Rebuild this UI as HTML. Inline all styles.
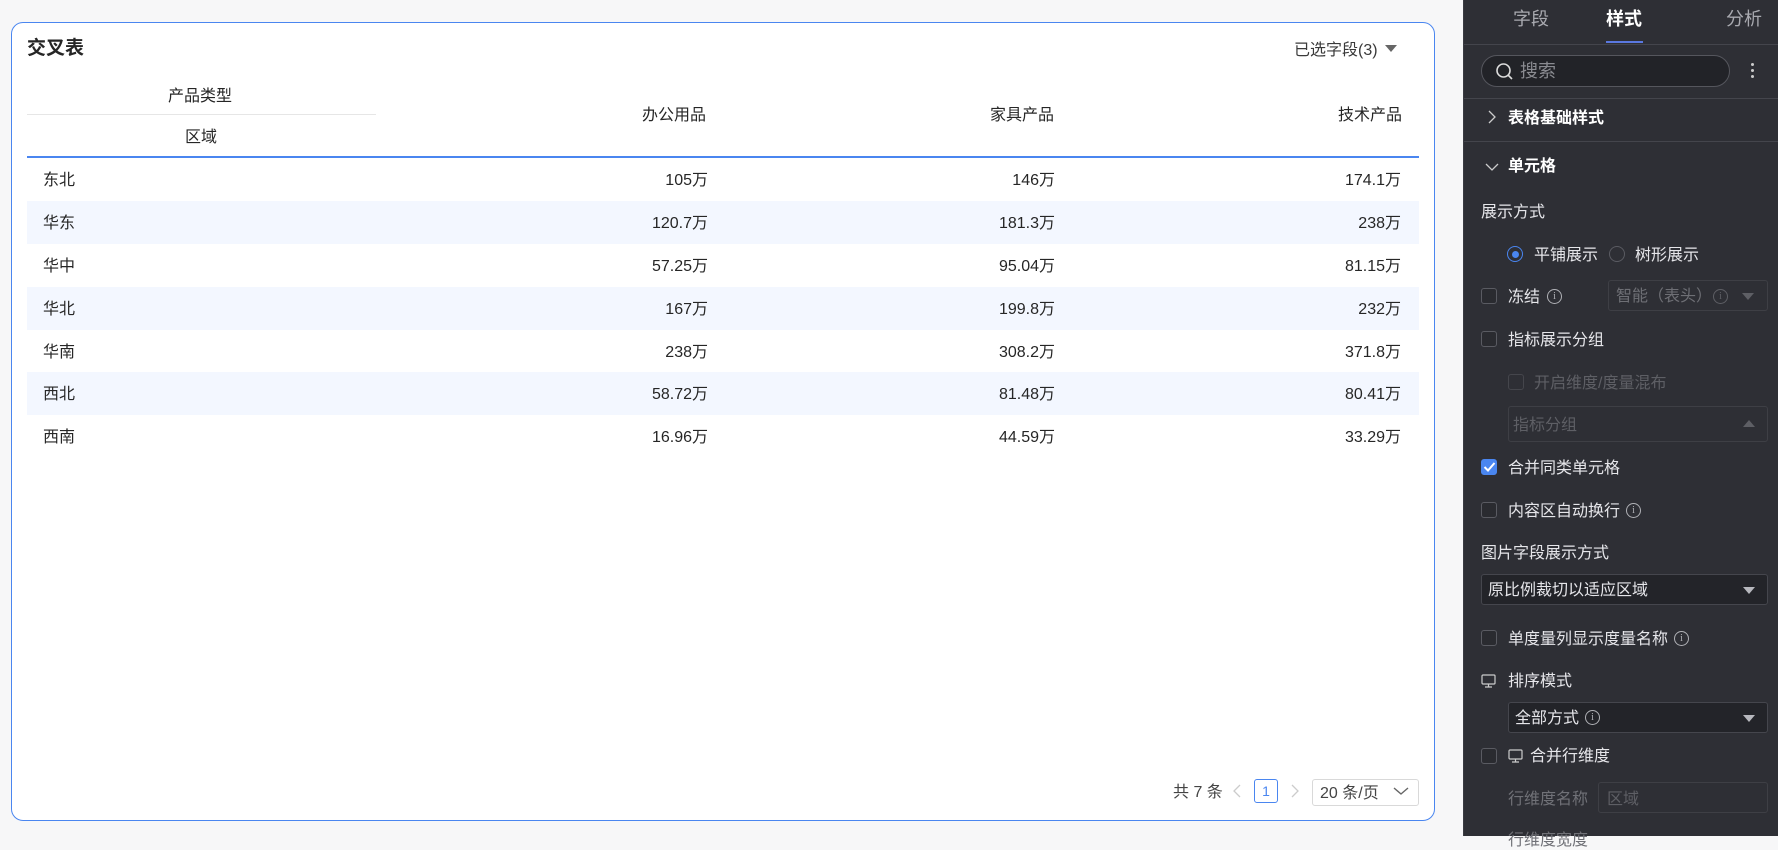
<!DOCTYPE html>
<html><head><meta charset="utf-8">
<style>
*{box-sizing:border-box;margin:0;padding:0}
body{width:1778px;height:836px;overflow:hidden;background:#f7f7f8;font-family:"Liberation Sans","Noto Sans CJK SC",sans-serif;position:relative}
.a{position:absolute;white-space:nowrap}
.card{position:absolute;left:11px;top:22px;width:1424px;height:799px;background:#fff;border:1.5px solid #4a86f0;border-radius:12px}
.t{font-size:16px;color:#262626}
.row{position:absolute;left:27px;width:1392px;height:43px}
.row.s{background:#f3f7ff}
.row span{position:absolute;top:8px;font-size:16px;color:#262626}
.panel{position:absolute;left:1463px;top:0;width:315px;height:836px;background:#2e2f35;border-left:1px solid #3a3b42}
.pt{position:absolute;white-space:nowrap;font-size:16px;color:#e6e6ea;margin-top:-3px}
.tx{margin-top:-3px}
.dim{color:#6e6f75}
.cb{position:absolute;width:16px;height:16px;border:1px solid #5a5b62;border-radius:3px;background:#2a2b30}
.sel{position:absolute;border:1px solid #45464d;border-radius:3px;background:#232429}
.tri{position:absolute;width:0;height:0;border-left:6px solid transparent;border-right:6px solid transparent;border-top:7px solid #b7b8be}
.info{position:absolute;width:15px;height:15px;border:1.3px solid #b0b1b6;border-radius:50%;font-size:10px;color:#b0b1b6;text-align:center;line-height:13px;font-family:"Liberation Serif",serif}
.hl{position:absolute;left:0;width:315px;height:1px;background:#44454c}
</style></head><body>
<div class="card"></div>
<div class="a tx" style="left:27px;top:36px;font-size:19px;font-weight:bold;color:#262626">交叉表</div>
<div class="a tx" style="left:1294px;top:39px;font-size:16px;color:#3a3a3a">已选字段(3)</div>
<div class="a" style="left:1385px;top:45px;width:0;height:0;border-left:6px solid transparent;border-right:6px solid transparent;border-top:7px solid #666"></div>
<div class="a t tx" style="left:168px;top:85px">产品类型</div>
<div class="a" style="left:27px;top:114px;width:349px;height:1px;background:#e6e6e6"></div>
<div class="a t tx" style="left:185px;top:126px">区域</div>
<div class="a t tx" style="left:642px;top:104px">办公用品</div>
<div class="a t tx" style="left:990px;top:104px">家具产品</div>
<div class="a t tx" style="left:1338px;top:104px">技术产品</div>
<div class="a" style="left:27px;top:156px;width:1392px;height:1.5px;background:#4a86f0"></div>

<div class="row" style="top:158px"><span style="left:16px">东北</span><span style="right:711px">105万</span><span style="right:364px">146万</span><span style="right:18px">174.1万</span></div>
<div class="row s" style="top:201px"><span style="left:16px">华东</span><span style="right:711px">120.7万</span><span style="right:364px">181.3万</span><span style="right:18px">238万</span></div>
<div class="row" style="top:244px"><span style="left:16px">华中</span><span style="right:711px">57.25万</span><span style="right:364px">95.04万</span><span style="right:18px">81.15万</span></div>
<div class="row s" style="top:287px"><span style="left:16px">华北</span><span style="right:711px">167万</span><span style="right:364px">199.8万</span><span style="right:18px">232万</span></div>
<div class="row" style="top:330px"><span style="left:16px">华南</span><span style="right:711px">238万</span><span style="right:364px">308.2万</span><span style="right:18px">371.8万</span></div>
<div class="row s" style="top:372px"><span style="left:16px">西北</span><span style="right:711px">58.72万</span><span style="right:364px">81.48万</span><span style="right:18px">80.41万</span></div>
<div class="row" style="top:415px"><span style="left:16px">西南</span><span style="right:711px">16.96万</span><span style="right:364px">44.59万</span><span style="right:18px">33.29万</span></div>

<div class="a tx" style="left:1173px;top:781px;font-size:16px;color:#444">共 7 条</div>
<svg class="a" style="left:1232px;top:784px" width="10" height="14"><path d="M8 1L2 7l6 6" stroke="#ccc" stroke-width="1.3" fill="none"/></svg>
<div class="a" style="left:1254px;top:779px;width:24px;height:24px;border:1px solid #4a86f0;border-radius:3px;color:#4a86f0;font-size:14px;text-align:center;line-height:22px">1</div>
<svg class="a" style="left:1290px;top:784px" width="10" height="14"><path d="M2 1l6 6-6 6" stroke="#ccc" stroke-width="1.3" fill="none"/></svg>
<div class="a" style="left:1312px;top:779px;width:107px;height:27px;border:1px solid #d9d9d9;border-radius:3px"></div>
<div class="a tx" style="left:1320px;top:782px;font-size:16px;color:#444">20 条/页</div>
<svg class="a" style="left:1393px;top:786px" width="16" height="10"><path d="M1 2l7 6 7-6" stroke="#666" stroke-width="1.4" fill="none"/></svg>

<div class="panel">
 <div class="pt" style="left:49px;top:8px;font-size:18px;color:#a9aab0">字段</div>
 <div class="pt" style="left:142px;top:8px;font-size:18px;color:#fff;font-weight:bold">样式</div>
 <div class="pt" style="left:262px;top:8px;font-size:18px;color:#a9aab0">分析</div>
 <div style="position:absolute;left:142px;top:41px;width:37px;height:2px;background:#5a78e0"></div>
 <div class="hl" style="top:44px"></div>
 <div style="position:absolute;left:17px;top:55px;width:249px;height:32px;border:1px solid #55565d;border-radius:16px;background:#222328"></div>
 <svg style="position:absolute;left:31px;top:62px" width="20" height="20"><circle cx="8.5" cy="8.5" r="6.5" stroke="#ddd" stroke-width="1.6" fill="none"/><path d="M13 13l4 4" stroke="#ddd" stroke-width="1.6"/></svg>
 <div class="pt" style="left:56px;top:60px;font-size:18px;color:#8a8b91">搜索</div>
 <div style="position:absolute;left:287px;top:63px;width:3px;height:3px;border-radius:50%;background:#ccc;box-shadow:0 6px 0 #ccc,0 12px 0 #ccc"></div>
 <div class="hl" style="top:98px"></div>
 <svg style="position:absolute;left:23px;top:110px" width="10" height="14"><path d="M2 1l6 6-6 6" stroke="#ccc" stroke-width="1.3" fill="none"/></svg>
 <div class="pt" style="left:44px;top:107px;font-weight:bold;color:#fff">表格基础样式</div>
 <div class="hl" style="top:141px"></div>
 <svg style="position:absolute;left:21px;top:162px" width="14" height="10"><path d="M1 2l6 6 6-6" stroke="#ccc" stroke-width="1.3" fill="none"/></svg>
 <div class="pt" style="left:44px;top:155px;font-weight:bold;color:#fff">单元格</div>
 <div class="pt" style="left:17px;top:201px">展示方式</div>
 <div style="position:absolute;left:43px;top:246px;width:16px;height:16px;border:1.5px solid #4a86f0;border-radius:50%"></div>
 <div style="position:absolute;left:47.5px;top:250.5px;width:7px;height:7px;background:#4a86f0;border-radius:50%"></div>
 <div class="pt" style="left:70px;top:244px">平铺展示</div>
 <div style="position:absolute;left:145px;top:246px;width:16px;height:16px;border:1px solid #5a5b62;border-radius:50%"></div>
 <div class="pt" style="left:171px;top:244px">树形展示</div>

 <div class="cb" style="left:17px;top:288px"></div>
 <div class="pt" style="left:44px;top:286px">冻结</div>
 <div class="info" style="left:83px;top:289px">i</div>
 <div class="sel" style="left:144px;top:280px;width:160px;height:31px;border-color:#3e3f45;background:#2e2f35"></div>
 <div class="pt dim" style="left:152px;top:285px">智能（表头）</div>
 <div class="info" style="left:249px;top:289px;border-color:#5e5f65;color:#5e5f65">i</div>
 <div class="tri" style="left:278px;top:293px;border-top-color:#5e5f65"></div>

 <div class="cb" style="left:17px;top:331px"></div>
 <div class="pt" style="left:44px;top:329px">指标展示分组</div>
 <div class="cb" style="left:44px;top:374px;border-color:#45464c;background:#2e2f35"></div>
 <div class="pt dim" style="left:70px;top:372px;color:#5e5f65">开启维度/度量混布</div>
 <div class="sel" style="left:44px;top:406px;width:260px;height:36px;border-color:#3e3f45;background:#2e2f35"></div>
 <div class="pt" style="left:49px;top:414px;color:#5e5f65">指标分组</div>
 <div class="tri" style="left:279px;top:420px;border-top:none;border-bottom:7px solid #5e5f65"></div>

 <div class="cb" style="left:17px;top:459px;background:#4a86f0;border-color:#4a86f0"></div>
 <svg style="position:absolute;left:19px;top:461px" width="13" height="12"><path d="M1.5 6l3.5 3.5 6.5-7.5" stroke="#fff" stroke-width="2" fill="none"/></svg>
 <div class="pt" style="left:44px;top:457px">合并同类单元格</div>
 <div class="cb" style="left:17px;top:502px"></div>
 <div class="pt" style="left:44px;top:500px">内容区自动换行</div>
 <div class="info" style="left:162px;top:503px">i</div>
 <div class="pt" style="left:17px;top:542px">图片字段展示方式</div>
 <div class="sel" style="left:17px;top:574px;width:287px;height:31px"></div>
 <div class="pt" style="left:24px;top:579px">原比例裁切以适应区域</div>
 <div class="tri" style="left:279px;top:587px"></div>

 <div class="cb" style="left:17px;top:630px"></div>
 <div class="pt" style="left:44px;top:628px">单度量列显示度量名称</div>
 <div class="info" style="left:210px;top:631px">i</div>
 <svg style="position:absolute;left:17px;top:674px" width="15" height="14"><rect x="1" y="1" width="13" height="9" rx="1" stroke="#ccc" stroke-width="1.2" fill="none"/><path d="M7.5 10v3M4 13h7" stroke="#ccc" stroke-width="1.2"/></svg>
 <div class="pt" style="left:44px;top:670px">排序模式</div>
 <div class="sel" style="left:44px;top:702px;width:260px;height:31px"></div>
 <div class="pt" style="left:51px;top:707px">全部方式</div>
 <div class="info" style="left:121px;top:710px">i</div>
 <div class="tri" style="left:279px;top:715px"></div>

 <div class="cb" style="left:17px;top:748px"></div>
 <svg style="position:absolute;left:44px;top:749px" width="15" height="14"><rect x="1" y="1" width="13" height="9" rx="1" stroke="#ccc" stroke-width="1.2" fill="none"/><path d="M7.5 10v3M4 13h7" stroke="#ccc" stroke-width="1.2"/></svg>
 <div class="pt" style="left:66px;top:745px">合并行维度</div>
 <div class="pt" style="left:44px;top:788px;color:#707177">行维度名称</div>
 <div class="sel" style="left:134px;top:782px;width:170px;height:31px;border-color:#3e3f45;background:#2e2f35"></div>
 <div class="pt" style="left:143px;top:788px;color:#5e5f65">区域</div>
 <div class="pt" style="left:44px;top:829px;color:#707177">行维度宽度</div>
</div>
</body></html>
